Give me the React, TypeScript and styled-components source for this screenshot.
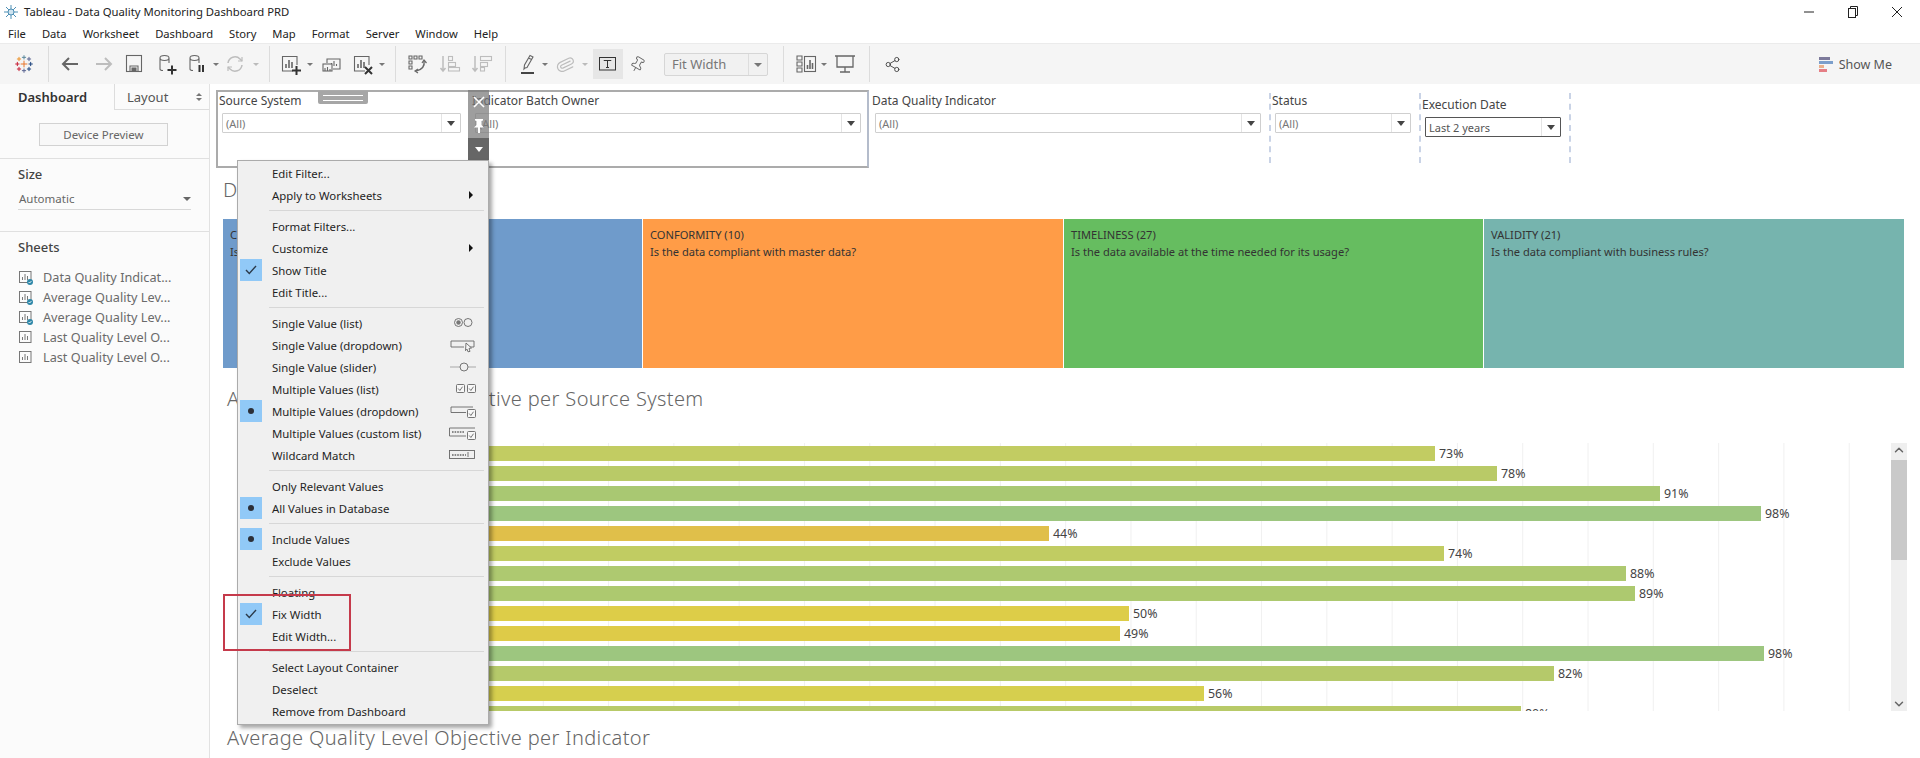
import React from 'react';
import styled, { createGlobalStyle } from 'styled-components';
import { ChevronDown, ChevronUp, Paperclip, Pin, Share2 } from 'lucide-react';

const Global = createGlobalStyle`
  html, body { margin: 0; padding: 0; background: #fff; overflow: hidden; }
  * { box-sizing: border-box; }
  body { font-family: "Noto Sans", "Liberation Sans", sans-serif; color: #333; }
`;

const Page = styled.div`
  width: 1920px; height: 758px; display: flex; flex-direction: column; overflow: hidden; background: #fff;
`;
const TitleBar = styled.div`
  height: 23px; display: flex; align-items: center; padding-left: 3px; gap: 5px; font-size: 11.3px; color: #222;
  position: relative;
`;
const WindowControls = styled.div`
  margin-left: auto; width: 116px; padding-right: 17px; padding-left: 0; display: flex; justify-content: space-between; align-items: center; color: #222;
`;
const MenuBar = styled.div`
  height: 20px; display: flex; align-items: center; padding-left: 8px; gap: 16px; font-size: 11.2px; color: #222;
  border-bottom: 0;
`;
const Toolbar = styled.div`
  height: 41px; background: #f5f5f5; border-top: 1px solid #ebebeb; display: flex; align-items: center; padding: 0 28px 0 12px;
`;
const Tool = styled.div<{ $ml?: number; $w?: number; $active?: boolean; $off?: boolean }>`
  flex: none; width: ${p => p.$w ?? 24}px; height: ${p => (p.$active ? 30 : 24)}px; margin-left: ${p => p.$ml ?? 0}px;
  display: flex; align-items: center; justify-content: center;
  background: ${p => (p.$active ? '#e6e6e6' : 'transparent')};
  color: ${p => (p.$off ? '#bdbdbd' : '#666')};
`;
const ToolSep = styled.div<{ $ml: number }>`
  flex: none; width: 1px; height: 36px; background: #dcdcdc; margin-left: ${p => p.$ml}px;
`;
const Caret = styled.div<{ $ml: number; $off?: boolean }>`
  flex: none; width: 8px; margin-left: ${p => p.$ml}px; height: 24px; display: flex; align-items: center; justify-content: center;
  &::before { content: ''; border-left: 3px solid transparent; border-right: 3px solid transparent; border-top: 3px solid ${p => (p.$off ? '#bbb' : '#777')}; }
`;
const FitSelect = styled.div`
  flex: none; width: 104px; height: 23px; margin-left: 15px; border: 1px solid #d6d6d6; border-radius: 2px; background: #f1f1f1;
  display: flex; align-items: center; font-size: 13px; color: #777; padding-left: 7px; position: relative;
  &::after { content: ''; position: absolute; right: 0; top: 0; width: 18px; height: 21px; border-left: 1px solid #ddd; }
  &::before { content: ''; position: absolute; right: 5px; top: 9px; border-left: 4px solid transparent; border-right: 4px solid transparent; border-top: 4px solid #777; }
`;
const ShowMe = styled.div`
  margin-left: auto; display: flex; align-items: center; gap: 6px; font-size: 12.5px; color: #555;
`;
const ShowBars = styled.div`
  width: 14px; display: flex; flex-direction: column; gap: 1px;
`;
const ShowBar = styled.div<{ $w: number; $c: string }>`
  height: 3px; width: ${p => p.$w}px; background: ${p => p.$c};
`;

const Body = styled.div`
  flex: 1; display: flex; min-height: 0;
`;
const Sidebar = styled.aside`
  width: 210px; flex: none; background: #fbfbfb; border-right: 1px solid #e2e2e2; display: flex; flex-direction: column;
`;
const Tabs = styled.div`
  height: 26px; display: flex; font-size: 13px;
`;
const TabActive = styled.div`
  width: 114px; padding-left: 18px; display: flex; align-items: center; font-weight: 600; color: #333;
`;
const Tab = styled.div`
  flex: 1; padding: 0 7px 0 12px; display: flex; align-items: center; justify-content: space-between; color: #555;
  border-left: 1px solid #ddd; border-bottom: 1px solid #ddd;
`;
const UpDown = styled.span`
  display: flex; flex-direction: column; gap: 2px;
  &::before, &::after { content: ''; border-left: 3px solid transparent; border-right: 3px solid transparent; }
  &::before { border-bottom: 3px solid #777; }
  &::after { border-top: 3px solid #777; }
`;
const PreviewArea = styled.div`
  height: 49px; padding: 13px 0 0 39px; border-bottom: 1px solid #e0e0e0;
`;
const PreviewBtn = styled.div`
  width: 129px; height: 23px; border: 1px solid #d2d2d2; background: #f8f8f8; display: flex; align-items: center; justify-content: center;
  font-size: 11.5px; color: #666;
`;
const SizeArea = styled.div`
  height: 73px; padding: 5px 18px 0; border-bottom: 1px solid #e0e0e0;
`;
const SideTitle = styled.div`
  font-size: 13px; font-weight: 500; color: #444; line-height: 20px;
`;
const SizeSelect = styled.div`
  margin-top: 4px; height: 22px; border-bottom: 1px solid #d8d8d8; display: flex; align-items: center; justify-content: space-between;
  font-size: 11.5px; color: #666; padding: 0 0 0 1px;
  &::after { content: ''; border-left: 4px solid transparent; border-right: 4px solid transparent; border-top: 4px solid #666; }
`;
const SheetsArea = styled.div`
  padding: 5px 18px 0;
`;
const SheetList = styled.div`
  margin-top: 10px; display: flex; flex-direction: column;
`;
const SheetRow = styled.div`
  height: 20px; display: flex; align-items: center; gap: 10px; font-size: 12.7px; color: #6a6a6a; white-space: nowrap;
`;

const Main = styled.main`
  flex: 1; position: relative; min-width: 0; display: flex; flex-direction: column;
`;
const FilterBar = styled.div`
  height: 93px; display: flex; padding: 9px 0 0 6px; flex: none;
`;
const Cell = styled.div<{ $w: number; $dash?: boolean; $end?: boolean; $drop?: number }>`
  flex: none; width: ${p => p.$w}px; height: 70px; padding: ${p => p.$drop ?? 0}px 8px 0 6px;
  ${p => (p.$dash ? 'border-left: 2px dashed #c9d3e6; padding-left: 4px;' : '')}
  ${p => (p.$end ? 'border-right: 2px dashed #c9d3e6;' : '')}
`;
const FilterLabel = styled.div`
  font-size: 12px; line-height: 16px; color: #444; margin: 0 0 4px -3px; white-space: nowrap;
`;
const Dropdown = styled.div<{ $dark?: boolean }>`
  height: 20px; border: 1px solid ${p => (p.$dark ? '#555' : '#cfcfcf')}; border-radius: 1px; display: flex; align-items: center; justify-content: space-between;
  font-size: 11px; color: ${p => (p.$dark ? '#555' : '#777')}; background: #fff; padding-left: 3px; position: relative;
  &::after { content: ''; width: 18px; height: 18px; border-left: 1px solid #e4e4e4; flex: none; }
  &::before { content: ''; position: absolute; right: 5px; top: 7px; border-left: 4px solid transparent; border-right: 4px solid transparent; border-top: 5px solid #444; }
`;
const Heading = styled.div<{ $ml: number; $mt?: number; $mb?: number }>`
  flex: none; font-size: 20px; font-weight: 300; letter-spacing: 0.38px; line-height: 26px; color: #666; margin: ${p => p.$mt ?? 0}px 0 ${p => p.$mb ?? 0}px ${p => p.$ml}px; white-space: nowrap;
`;
const Cards = styled.div`
  flex: none; height: 149px; margin: 0 17px 0 13px; display: flex; gap: 1px;
`;
const Card = styled.div<{ $bg: string; $w: number }>`
  flex: none; width: ${p => p.$w}px; background: ${p => p.$bg}; padding: 7px 7px; font-size: 11.1px; line-height: 17px; color: #333; white-space: nowrap; overflow: hidden;
`;
const Chart = styled.div`
  flex: none; height: 268px; margin: 31px 13px 0 13px; display: flex;
`;
const Plot = styled.div`
  flex: 1; overflow: hidden; padding: 3px 0 0 245px; display: flex; flex-direction: column; gap: 5px;
  background-image: linear-gradient(to right, #f0f0f0 1px, transparent 1px);
  background-size: 65.3px 100%;
  background-position: 58.6px 0;
`;
const BarRow = styled.div`
  flex: none; height: 15px; display: flex; align-items: center; gap: 4px; font-size: 12.4px; color: #444;
`;
const Bar = styled.div<{ $c: string }>`
  height: 15px; background: ${p => p.$c};
`;
const Scroll = styled.div`
  flex: none; width: 16px; background: #efefef; display: flex; flex-direction: column; align-items: center; justify-content: space-between; position: relative; color: #666;
`;
const Thumb = styled.div`
  position: absolute; left: 0; right: 0; top: 17px; height: 100px; background: #c9c9c9;
`;

const SelectFrame = styled.div`
  position: absolute; left: 6px; top: 6px; width: 653px; height: 78px; border: 2px solid #ababab; border-right-color: #b4bccb; pointer-events: none; z-index: 2;
`;
const Grip = styled.div`
  position: absolute; left: 108px; top: 7px; width: 50px; height: 13px; background: #a6a6a6; border-radius: 0 0 2px 2px; z-index: 3;
  &::after { content: ''; position: absolute; left: 5px; right: 5px; top: 4px; height: 4px; border-top: 1px solid #fff; border-bottom: 1px solid #fff; }
`;
const Handles = styled.div`
  position: absolute; left: 258px; top: 6px; width: 21px; height: 70px; z-index: 3; display: flex; flex-direction: column; color: #fff;
`;
const Handle = styled.div<{ $h: number; $dark?: boolean }>`
  height: ${p => p.$h}px; background: ${p => (p.$dark ? '#666' : 'rgba(120,120,120,0.72)')}; display: flex; align-items: center; justify-content: center;
`;
const MenuDown = styled.span`
  border-left: 4px solid transparent; border-right: 4px solid transparent; border-top: 5px solid #fff;
`;

const Popup = styled.div`
  position: absolute; left: 27px; top: 76px; width: 252px; height: 565px; background: #f0f0f0; border: 1px solid #ababab; padding: 1px 1px;
  box-shadow: 3px 3px 4px rgba(0,0,0,0.35); z-index: 4; font-size: 11.4px; color: #1f1f1f;
`;
const Row = styled.div`
  height: 22px; display: flex; align-items: center; position: relative; padding-left: 33px; white-space: nowrap;
`;
const Mark = styled.div`
  position: absolute; left: 1px; top: 0; width: 22px; height: 22px; background: #91c9f7; display: flex; align-items: center; justify-content: center; color: #2b3a4a;
`;
const Dot = styled.span`
  width: 6px; height: 6px; border-radius: 50%; background: #2b2f38;
`;
const Sub = styled.span`
  position: absolute; right: 14px; top: 7px; border-top: 4px solid transparent; border-bottom: 4px solid transparent; border-left: 4px solid #111;
`;
const Glyph = styled.span`
  position: absolute; right: 10px; top: 3px; width: 28px; height: 16px; display: flex; color: #666;
`;
const Sep = styled.div`
  height: 9px; margin-left: 30px; margin-right: 3px; display: flex; align-items: center;
  &::after { content: ''; flex: 1; height: 1px; background: #d7d7d7; }
`;
const RedBox = styled.div`
  position: absolute; left: 13px; top: 510px; width: 128px; height: 57px; border: 2px solid #c53a4b; z-index: 5; pointer-events: none;
`;

const Ico = ({ children }: { children: React.ReactNode }) => (
  <svg width="24" height="24" viewBox="0 0 24 24" fill="none" stroke="currentColor" strokeWidth="1.1">{children}</svg>
);
const BoldPlus = ({ x = 18, y = 18 }: { x?: number; y?: number }) => (
  <path d={`M${x - 4.5} ${y}h9M${x} ${y - 4.5}v9`} stroke="#333" strokeWidth="2" />
);
const Cyl = () => (
  <path d="M6 6c0-1.6 2.4-2.5 4.5-2.5S15 4.4 15 6v5M6 6c0 1.6 2.4 2.5 4.5 2.5S15 7.6 15 6M6 6v11c0 1 1 1.5 3 1.5" />
);
const Chartlet = () => (
  <>
    <path d="M15 19H4.5V4.5H19V13" />
    <path d="M8 16v-4M11 16V8M14 16v-6" strokeWidth="1.6" />
  </>
);

const Logo = () => {
  const cs: [number, number, string, number][] = [
    [12, 12, '#e8762d', 4],
    [12, 4, '#5b879b', 2.5],
    [12, 20, '#5b6591', 2.5],
    [4, 12, '#c72037', 2.5],
    [20, 12, '#1f457e', 2.5],
    [6, 6, '#eb9129', 2.5],
    [18, 6, '#5b6591', 2.5],
    [6, 18, '#c72037', 2.5],
    [18, 18, '#1f447e', 2.5],
  ];
  return (
    <svg width="20" height="20" viewBox="0 0 24 24" fill="none" strokeWidth="1.2">
      {cs.map(([x, y, c, r], i) => (
        <path key={i} d={`M${x - r} ${y}h${2 * r}M${x} ${y - r}v${2 * r}`} stroke={c} />
      ))}
    </svg>
  );
};
const AppIcon = () => (
  <svg width="16" height="16" viewBox="0 0 16 16" fill="none" stroke="#4d8fb5" strokeWidth="1">
    <path d="M8 1v14M1 8h14M3 3l10 10M13 3L3 13" />
    <circle cx="8" cy="8" r="3" fill="#cfe3ef" />
  </svg>
);

const SheetIcon = ({ ok }: { ok?: boolean }) => (
  <svg width="14" height="15" viewBox="0 0 14 15" fill="none" style={{ flex: 'none', marginLeft: 1 }}>
    <rect x=".5" y="1.5" width="11.5" height="11" stroke="#777" />
    <path d="M3.5 10V7M6 10V4M8.5 10V6" stroke="#777" />
    {ok && <circle cx="11" cy="12" r="3" fill="#2f87a8" />}
    {ok && <path d="M9.6 12l1 1 1.8-1.9" stroke="#fff" strokeWidth=".9" />}
  </svg>
);

const G = ({ children }: { children: React.ReactNode }) => (
  <svg width="28" height="16" viewBox="0 0 28 16" fill="none" stroke="currentColor" strokeWidth=".9">{children}</svg>
);
const Box = ({ x, y = 4 }: { x: number; y?: number }) => (
  <>
    <rect x={x + 0.5} y={y + 0.5} width="8" height="8" rx="1" fill="#f7f7f7" />
    <path d={`M${x + 2.2} ${y + 4.5}l1.7 2 2.6-3.8`} />
  </>
);
const Check = () => (
  <svg width="12" height="10" viewBox="0 0 12 10" fill="none" stroke="currentColor" strokeWidth="1.4"><path d="M1 5l3.3 3.5L11 1" /></svg>
);

type Item =
  | { t: 'sep' }
  | { t: 'row'; label: string; mark?: 'check' | 'dot'; sub?: boolean; glyph?: React.ReactNode };

const items: Item[] = [
  { t: 'row', label: 'Edit Filter...' },
  { t: 'row', label: 'Apply to Worksheets', sub: true },
  { t: 'sep' },
  { t: 'row', label: 'Format Filters...' },
  { t: 'row', label: 'Customize', sub: true },
  { t: 'row', label: 'Show Title', mark: 'check' },
  { t: 'row', label: 'Edit Title...' },
  { t: 'sep' },
  { t: 'row', label: 'Single Value (list)', glyph: <G><circle cx="9.5" cy="7.5" r="4" /><circle cx="9.5" cy="7.5" r="2.2" fill="#777" stroke="none" /><circle cx="19" cy="7.5" r="4" /></G> },
  { t: 'row', label: 'Single Value (dropdown)', glyph: <G><path d="M15 10H2V4h23v6h-4" /><path d="M17 6l5.5 5-2.5.4 1 3-2 .4-1-2.7-1.5 1.6z" fill="#f5f5f5" /></G> },
  { t: 'row', label: 'Single Value (slider)', glyph: <G><path d="M1 8h21M20 8h7" stroke="#ccc" strokeWidth="1.8" /><circle cx="15" cy="8" r="4" fill="#f0f0f0" /></G> },
  { t: 'row', label: 'Multiple Values (list)', glyph: <G><Box x={7} y={3} /><Box x={18} y={3} /></G> },
  { t: 'row', label: 'Multiple Values (dropdown)', mark: 'dot', glyph: <G><path d="M17 9.5H2V4h22" /><Box x={18} y={6} /></G> },
  { t: 'row', label: 'Multiple Values (custom list)', glyph: <G><path d="M17 11H.5V3H26" /><path d="M3 7h12" strokeDasharray="1.6 1" strokeWidth="1.6" /><Box x={18} y={6} /></G> },
  { t: 'row', label: 'Wildcard Match', glyph: <G><rect x=".5" y="3.5" width="25" height="8" /><path d="M3 8h14" strokeDasharray="1.6 1" strokeWidth="1.6" /><path d="M19 5v5" /></G> },
  { t: 'sep' },
  { t: 'row', label: 'Only Relevant Values' },
  { t: 'row', label: 'All Values in Database', mark: 'dot' },
  { t: 'sep' },
  { t: 'row', label: 'Include Values', mark: 'dot' },
  { t: 'row', label: 'Exclude Values' },
  { t: 'sep' },
  { t: 'row', label: 'Floating' },
  { t: 'row', label: 'Fix Width', mark: 'check' },
  { t: 'row', label: 'Edit Width...' },
  { t: 'sep' },
  { t: 'row', label: 'Select Layout Container' },
  { t: 'row', label: 'Deselect' },
  { t: 'row', label: 'Remove from Dashboard' },
];

const bars: [number, number, string][] = [
  [1435, 73, '#c2cc62'],
  [1497, 78, '#b9ca67'],
  [1660, 91, '#a9c872'],
  [1761, 98, '#9dc67f'],
  [1049, 44, '#e0bf4a'],
  [1444, 74, '#c1cc62'],
  [1626, 88, '#aec970'],
  [1635, 89, '#adc96f'],
  [1129, 50, '#ddcd48'],
  [1120, 49, '#decb48'],
  [1764, 98, '#9dc67f'],
  [1554, 82, '#b5c96a'],
  [1204, 56, '#d6cf4e'],
  [1521, 80, '#b8ca68'],
];

const sheets: [string, boolean][] = [
  ['Data Quality Indicat...', true],
  ['Average Quality Lev...', true],
  ['Average Quality Lev...', true],
  ['Last Quality Level O...', false],
  ['Last Quality Level O...', false],
];

const menus = ['File', 'Data', 'Worksheet', 'Dashboard', 'Story', 'Map', 'Format', 'Server', 'Window', 'Help'];

export default function App() {
  return (
    <Page>
      <Global />
      <TitleBar>
        <AppIcon />
        <span>Tableau - Data Quality Monitoring Dashboard PRD</span>
        <WindowControls>
          <svg width="10" height="10" viewBox="0 0 10 10" stroke="currentColor"><path d="M0 5h10" /></svg>
          <svg width="10" height="12" viewBox="0 0 10 12" fill="none" stroke="currentColor"><rect x=".5" y="2.5" width="7" height="9" /><path d="M2.5 2.5v-2h7v9h-2" /></svg>
          <svg width="12" height="12" viewBox="0 0 12 12" stroke="currentColor"><path d="M1 1l10 10M11 1L1 11" /></svg>
        </WindowControls>
      </TitleBar>
      <MenuBar>{menus.map(m => <span key={m}>{m}</span>)}</MenuBar>
      <Toolbar>
        <Tool><Logo /></Tool>
        <ToolSep $ml={12} />
        <Tool $ml={9}><Ico><path d="M20 12H5M11 6l-6 6 6 6" strokeWidth="2" /></Ico></Tool>
        <Tool $ml={10} $off><Ico><path d="M4 12h15M13 6l6 6-6 6" strokeWidth="2" /></Ico></Tool>
        <Tool $ml={6}><Ico><rect x="4.5" y="3.5" width="15" height="16" /><path d="M8 19v-5h8v5" /><rect x="10" y="16" width="4" height="3" fill="currentColor" /></Ico></Tool>
        <Tool $ml={8}><Ico><Cyl /><BoldPlus /></Ico></Tool>
        <Tool $ml={6}><Ico><Cyl /><path d="M15.5 13v7M19 13v7" stroke="#333" strokeWidth="2" /></Ico></Tool>
        <Caret $ml={4} />
        <Tool $ml={3} $off><Ico><path d="M5 11a7 7 0 0 1 12-4l2 2M19 13a7 7 0 0 1-12 4l-2-2" strokeWidth="1.5" /><path d="M19 5v4h-4M5 19v-4h4" strokeWidth="1.2" /></Ico></Tool>
        <Caret $ml={5} $off />
        <ToolSep $ml={9} />
        <Tool $ml={8}><Ico><Chartlet /><BoldPlus x={18.5} y={18.5} /></Ico></Tool>
        <Caret $ml={4} />
        <Tool $ml={6}><Ico><path d="M7 11V7h13v10h-7" /><path d="M11.5 14v-3M14 14V9M16.5 14v-2" /><rect x="3" y="12" width="9" height="7" fill="#f5f5f5" /><path d="M5 19v-3M7.500 19v-4M10 19v-2" /></Ico></Tool>
        <Tool $ml={6}><Ico><Chartlet /><path d="M15 15l7 7M22 15l-7 7" stroke="#333" strokeWidth="2" /></Ico></Tool>
        <Caret $ml={4} />
        <ToolSep $ml={9} />
        <Tool $ml={9}><Ico><path d="M4 4h3v3H4zM9 4h3v3H9zM14 4h3v3h-3zM4 9h3v3H4zM4 14h3v3H4z" /><path d="M19 9c1 5-2 9-8 10" strokeWidth="1.4" /><path d="M17 11l2-3 2.500 3M13 17l-3 2 3 2" strokeWidth="1.2" /></Ico></Tool>
        <Tool $ml={9} $off><Ico><path d="M5 4v15M2.500 16l2.500 3 2.500-3" strokeWidth="1.5" /><rect x="10.500" y="4.500" width="4" height="4" /><rect x="10.500" y="10.500" width="7" height="4" /><rect x="10.500" y="15.500" width="11" height="3.500" /></Ico></Tool>
        <Tool $ml={8} $off><Ico><path d="M5 4v15M2.500 16l2.500 3 2.500-3" strokeWidth="1.5" /><rect x="10.500" y="4.500" width="11" height="4" /><rect x="10.500" y="10.500" width="7" height="4" /><rect x="10.500" y="15.500" width="4" height="3.500" /></Ico></Tool>
        <ToolSep $ml={11} />
        <Tool $ml={10}><Ico><path d="M9 16l-1 1 .5-4L14 3.500l3 1.500-6 10.500zM12.500 6l3 1.500" /><path d="M5 21h13" stroke="#444" strokeWidth="2" /></Ico></Tool>
        <Caret $ml={1} />
        <Tool $ml={4} $off><Paperclip size={19} strokeWidth={1.5} style={{ transform: 'rotate(20deg)' }} /></Tool>
        <Caret $ml={4} $off />
        <Tool $ml={4} $w={30} $active><svg width="20" height="18" viewBox="0 0 20 18" fill="none" stroke="#333"><rect x="1.500" y="2.500" width="16" height="12.500" /><path d="M6 6V5.500h7V6M9.500 5.500v7M8 12.500h3" /></svg></Tool>
        <Tool $ml={2}><Pin size={17} strokeWidth={1.3} style={{ transform: 'rotate(30deg)' }} /></Tool>
        <FitSelect>Fit Width</FitSelect>
        <ToolSep $ml={15} />
        <Tool $ml={10}><Ico><path d="M3 4h5v4H3zM3 10h5v4H3zM3 16h5v4H3z" /><rect x="10.500" y="4.500" width="11" height="15" /><path d="M13.500 17v-4M16 17V8M18.500 17v-6" strokeWidth="1.6" /></Ico></Tool>
        <Caret $ml={2} />
        <Tool $ml={5}><Ico><path d="M2 4h20M4 4v11h16V4M12 15v5M7 20h10" strokeWidth="1.3" /></Ico></Tool>
        <ToolSep $ml={12} />
        <Tool $ml={10}><Share2 size={17} strokeWidth={1.3} color="#444" /></Tool>
        <ShowMe>
          <ShowBars>
            <ShowBar $w={11} $c="#7d7a9b" />
            <ShowBar $w={14} $c="#7c9fcb" />
            <ShowBar $w={5} $c="#eab08c" />
            <ShowBar $w={8} $c="#e57e85" />
          </ShowBars>
          Show Me
        </ShowMe>
      </Toolbar>
      <Body>
        <Sidebar>
          <Tabs>
            <TabActive>Dashboard</TabActive>
            <Tab>Layout<UpDown /></Tab>
          </Tabs>
          <PreviewArea><PreviewBtn>Device Preview</PreviewBtn></PreviewArea>
          <SizeArea>
            <SideTitle>Size</SideTitle>
            <SizeSelect>Automatic</SizeSelect>
          </SizeArea>
          <SheetsArea>
            <SideTitle>Sheets</SideTitle>
            <SheetList>
              {sheets.map(([s, ok], i) => (
                <SheetRow key={i}><SheetIcon ok={ok} />{s}</SheetRow>
              ))}
            </SheetList>
          </SheetsArea>
        </Sidebar>
        <Main>
          <FilterBar>
            <Cell $w={253}>
              <FilterLabel>Source System</FilterLabel>
              <Dropdown>(All)</Dropdown>
            </Cell>
            <Cell $w={400}>
              <FilterLabel>Indicator Batch Owner</FilterLabel>
              <Dropdown>(All)</Dropdown>
            </Cell>
            <Cell $w={400}>
              <FilterLabel>Data Quality Indicator</FilterLabel>
              <Dropdown>(All)</Dropdown>
            </Cell>
            <Cell $w={150} $dash>
              <FilterLabel>Status</FilterLabel>
              <Dropdown>(All)</Dropdown>
            </Cell>
            <Cell $w={152} $dash $end $drop={4}>
              <FilterLabel>Execution Date</FilterLabel>
              <Dropdown $dark>Last 2 years</Dropdown>
            </Cell>
          </FilterBar>
          <Heading $ml={13} $mb={16}>Data Quality Dimensions</Heading>
          <Cards>
            <Card $bg="#6f9bcb" $w={419}>COMPLETENESS (36)<br />Is the data complete and available for all records?</Card>
            <Card $bg="#ff9c47" $w={420}>CONFORMITY (10)<br />Is the data compliant with master data?</Card>
            <Card $bg="#66bd60" $w={419}>TIMELINESS (27)<br />Is the data available at the time needed for its usage?</Card>
            <Card $bg="#76b4ae" $w={420}>VALIDITY (21)<br />Is the data compliant with business rules?</Card>
          </Cards>
          <Heading $ml={17} $mt={18}>Average Quality Level Objective per Source System</Heading>
          <Chart>
            <Plot>
              {bars.map(([end, v, c], i) => (
                <BarRow key={i}>
                  <Bar $c={c} style={{ width: end - 468 }} />
                  {v}%
                </BarRow>
              ))}
            </Plot>
            <Scroll>
              <Thumb />
              <ChevronUp size={14} strokeWidth={2.5} />
              <ChevronDown size={14} strokeWidth={2.5} />
            </Scroll>
          </Chart>
          <Heading $ml={17} $mt={14}>Average Quality Level Objective per Indicator</Heading>

          <SelectFrame />
          <Grip />
          <Handles>
            <Handle $h={24}>
              <svg width="12" height="12" viewBox="0 0 12 12" stroke="#fff" strokeWidth="1.6"><path d="M1 1l10 10M11 1L1 11" /></svg>
            </Handle>
            <Handle $h={24}>
              <svg width="12" height="16" viewBox="0 0 12 16" fill="#fff"><path d="M2 1h8v1.500L8.500 3v4L11 9.500H7V15H5V9.500H1L3.500 7V3L2 2.500z" /></svg>
            </Handle>
            <Handle $h={22} $dark><MenuDown /></Handle>
          </Handles>
          <Popup>
            {items.map((it, i) =>
              it.t === 'sep' ? (
                <Sep key={i} />
              ) : (
                <Row key={i}>
                  {it.mark && <Mark>{it.mark === 'check' ? <Check /> : <Dot />}</Mark>}
                  {it.label}
                  {it.sub && <Sub />}
                  {it.glyph && <Glyph>{it.glyph}</Glyph>}
                </Row>
              )
            )}
          </Popup>
          <RedBox />
        </Main>
      </Body>
    </Page>
  );
}
